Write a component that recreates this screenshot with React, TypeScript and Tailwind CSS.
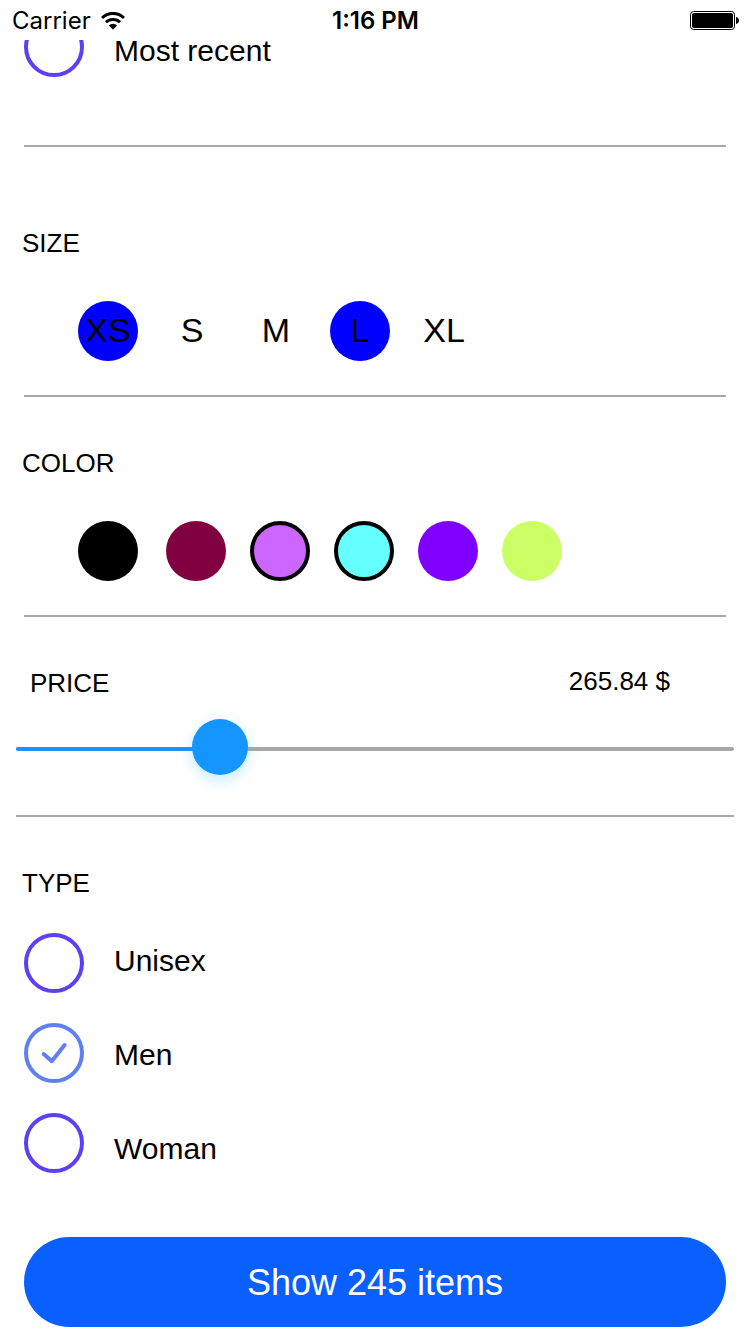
import { useState } from "react";

const sizes = ["XS", "S", "M", "L", "XL"];

const colors = [
  { name: "Black", className: "bg-black mr-1" },
  { name: "Maroon", className: "bg-[#800040]" },
  { name: "Orchid", className: "bg-[#cc66ff]" },
  { name: "Ice", className: "bg-[#66ffff]" },
  { name: "Grape", className: "bg-[#8000ff]" },
  { name: "Honeydew", className: "bg-[#ccff66]" },
];

function toggle(list: string[], item: string) {
  return list.includes(item) ? list.filter((i) => i !== item) : [...list, item];
}

function StatusBar() {
  return (
    <header className="grid h-10 grid-cols-3 items-center bg-white pr-[11px] pl-3 font-['Inter',sans-serif] text-[24px] leading-[30px]">
      <div className="flex items-center gap-[10px] pt-[2px]">
        <span>Carrier</span>
        <svg viewBox="0 0 24 18" className="h-[18px] w-6" aria-hidden="true">
          <g fill="none" stroke="#000" strokeWidth="3">
            <path d="M1 6 A15.5 15.5 0 0 1 23 6" />
            <path d="M5 10.3 A10 10 0 0 1 19 10.3" />
          </g>
          <path d="M12 17.8 L7.9 13.6 A5.7 5.7 0 0 1 16.1 13.6 Z" />
        </svg>
      </div>
      <span className="pt-[2px] text-center font-semibold">1:16 PM</span>
      <svg viewBox="0 0 49 19" className="h-[19px] w-[49px] justify-self-end" aria-hidden="true">
        <rect x="0.5" y="0.5" width="44" height="18" rx="3" fill="none" stroke="#000" />
        <rect x="2" y="2" width="41" height="15" rx="2" />
        <path d="M46 6 Q49 6.6 49 9.5 Q49 12.4 46 13 Z" />
      </svg>
    </header>
  );
}

function Divider({ className = "mx-6" }: { className?: string }) {
  return <hr className={`border-0 h-[2px] bg-[#a8a8a8] ${className}`} />;
}

type RadioListProps = {
  name: string;
  options: string[];
  value: string | null;
  onChange: (value: string) => void;
  labelClassName: string;
};

function RadioList({ name, options, value, onChange, labelClassName }: RadioListProps) {
  return (
    <div className="flex gap-[30px] px-6">
      <div className="flex flex-col gap-[30px]">
        {options.map((option) => (
          <span key={option} className="grid size-[60px]">
            <input
              type="radio"
              id={`${name}-${option}`}
              name={name}
              checked={value === option}
              onChange={() => onChange(option)}
              className="peer col-start-1 row-start-1 size-[60px] appearance-none rounded-full border-4 border-[#5f3ff5] checked:border-[#617ff5]"
            />
            <svg
              viewBox="0 0 60 60"
              className="pointer-events-none invisible col-start-1 row-start-1 size-[60px] peer-checked:visible"
              fill="none"
              stroke="#617ff5"
              strokeWidth="4"
              strokeLinecap="round"
              strokeLinejoin="round"
              aria-hidden="true"
            >
              <path d="M19.7 31 L27.8 38.2 L40.6 22" />
            </svg>
          </span>
        ))}
      </div>
      <div className={`flex flex-col items-start gap-[60px] ${labelClassName}`}>
        {options.map((option) => (
          <label key={option} htmlFor={`${name}-${option}`} className="text-[30px] leading-[34px]">
            {option}
          </label>
        ))}
      </div>
    </div>
  );
}

export default function App() {
  const [sort, setSort] = useState<string | null>(null);
  const [pickedSizes, setPickedSizes] = useState(["XS", "L"]);
  const [pickedColors, setPickedColors] = useState(["Orchid", "Ice"]);
  const [price, setPrice] = useState(265.84);
  const [type, setType] = useState<string | null>("Men");

  return (
    <div className="flex min-h-screen flex-col bg-white font-['Liberation_Sans',Arial,sans-serif] text-black">
      <StatusBar />
      <main className="flex grow flex-col overflow-hidden">
        <section className="-mt-[23px] pb-[68px]">
          <RadioList
            name="sort"
            options={["Most recent"]}
            value={sort}
            onChange={setSort}
            labelClassName="pt-[17px]"
          />
        </section>
        <Divider />

        <section className="pt-[81px] pb-[34px]">
          <h2 className="px-[22px] text-[26px] leading-[30px]">SIZE</h2>
          <div className="mt-[43px] flex gap-6 px-[78px]">
            {sizes.map((size) => (
              <label key={size} className="grid size-[60px] place-items-center">
                <input
                  type="checkbox"
                  checked={pickedSizes.includes(size)}
                  onChange={() => setPickedSizes(toggle(pickedSizes, size))}
                  className="col-start-1 row-start-1 size-[60px] appearance-none rounded-full checked:bg-[#0000ff]"
                />
                <span className="z-10 col-start-1 row-start-1 pb-[2px] text-[34px] leading-[38px]">{size}</span>
              </label>
            ))}
          </div>
        </section>
        <Divider />

        <section className="pt-[51px] pb-[34px]">
          <h2 className="px-[22px] text-[26px] leading-[30px]">COLOR</h2>
          <div className="mt-[43px] flex gap-6 px-[78px]">
            {colors.map((color) => (
              <input
                key={color.name}
                type="checkbox"
                aria-label={color.name}
                checked={pickedColors.includes(color.name)}
                onChange={() => setPickedColors(toggle(pickedColors, color.name))}
                className={`size-[60px] appearance-none rounded-full border-black checked:border-4 ${color.className}`}
              />
            ))}
          </div>
        </section>
        <Divider />

        <section className="px-4 pt-[49px] pb-10">
          <div className="flex items-start justify-between pr-16 pl-[14px] text-[26px] leading-[30px]">
            <label htmlFor="price" className="pt-[2px]">
              PRICE
            </label>
            <output htmlFor="price">{price.toFixed(2)} $</output>
          </div>
          <div className="mt-[21px] grid">
            <div className="col-start-1 row-start-1 flex items-end pb-6">
              <div className="h-1 w-full overflow-hidden rounded-full bg-[#a8a8a8]">
                <div className="h-full bg-[#1495ff]" style={{ width: `${price / 10}%` }} />
              </div>
            </div>
            <input
              id="price"
              type="range"
              min={0}
              max={1000}
              step={0.01}
              value={price}
              onChange={(e) => setPrice(Number(e.target.value))}
              className="z-10 col-start-1 row-start-1 h-14 w-full appearance-none bg-transparent [&::-webkit-slider-thumb]:size-14 [&::-webkit-slider-thumb]:appearance-none [&::-webkit-slider-thumb]:rounded-full [&::-webkit-slider-thumb]:bg-[#1495ff] [&::-webkit-slider-thumb]:shadow-[0_5px_14px_rgba(0,180,255,0.25)]"
            />
          </div>
        </section>
        <Divider className="mx-4" />

        <section className="pt-[51px]">
          <h2 className="mb-[35px] px-[22px] text-[26px] leading-[30px]">TYPE</h2>
          <RadioList
            name="type"
            options={["Unisex", "Men", "Woman"]}
            value={type}
            onChange={setType}
            labelClassName="pt-[11px]"
          />
        </section>
      </main>
      <footer className="px-6 pt-16 pb-[7px]">
        <button
          type="button"
          className="h-[90px] w-full rounded-[45px] bg-[#0a60ff] pt-[2px] text-[36px] leading-[40px] text-white"
        >
          Show 245 items
        </button>
      </footer>
    </div>
  );
}
